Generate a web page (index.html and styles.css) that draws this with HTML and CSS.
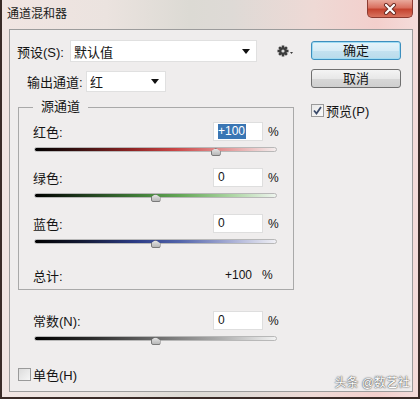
FILE: index.html
```html
<!DOCTYPE html>
<html lang="zh-CN">
<head>
    <meta charset="UTF-8">
    <title>通道混和器</title>
    <link rel="stylesheet" href="styles.css">
</head>
<body>
    <div class="window">
        <div class="titlebar">
            <span class="title">通道混和器</span>
            <div class="close">
                <svg width="14" height="12" viewBox="0 0 14 12">
                    <path d="M3 2 L11 10 M11 2 L3 10" stroke="#6a2a22" stroke-width="4" stroke-linecap="round"/>
                    <path d="M3 2 L11 10 M11 2 L3 10" stroke="#fff" stroke-width="2.2" stroke-linecap="round"/>
                </svg>
            </div>
        </div>

        <div class="client">
            <!-- 左侧 -->
            <div class="left">
                <div class="row preset">
                    <span class="label">预设(S):</span>
                    <div class="select">
                        <span>默认值</span>
                        <span class="arrow"></span>
                    </div>
                    <svg class="gear" width="17" height="12" viewBox="0 0 17 12">
                        <g transform="translate(6 6)" fill="#3c3c3c">
                            <rect x="-1.3" y="-5.5" width="2.6" height="11"/>
                            <rect x="-1.3" y="-5.5" width="2.6" height="11" transform="rotate(45)"/>
                            <rect x="-1.3" y="-5.5" width="2.6" height="11" transform="rotate(90)"/>
                            <rect x="-1.3" y="-5.5" width="2.6" height="11" transform="rotate(135)"/>
                            <circle r="3.8"/>
                            <circle r="1.6" fill="#d8d8d8"/>
                        </g>
                        <path d="M13 7 L16 7 L14.5 9 Z" fill="#3c3c3c"/>
                    </svg>
                </div>

                <div class="row output">
                    <span class="label">输出通道:</span>
                    <div class="select">
                        <span>红</span>
                        <span class="arrow"></span>
                    </div>
                </div>

                <fieldset class="source">
                    <legend>源通道</legend>

                    <div class="channel">
                        <div class="head">
                            <span class="name">红色:</span>
                            <div class="field"><span class="selected">+100</span></div>
                            <span class="pct">%</span>
                        </div>
                        <div class="track red">
                            <span class="thumb" style="left: 75%"></span>
                        </div>
                    </div>

                    <div class="channel">
                        <div class="head">
                            <span class="name">绿色:</span>
                            <div class="field">0</div>
                            <span class="pct">%</span>
                        </div>
                        <div class="track green">
                            <span class="thumb" style="left: 50%"></span>
                        </div>
                    </div>

                    <div class="channel">
                        <div class="head">
                            <span class="name">蓝色:</span>
                            <div class="field">0</div>
                            <span class="pct">%</span>
                        </div>
                        <div class="track blue">
                            <span class="thumb" style="left: 50%"></span>
                        </div>
                    </div>

                    <div class="total">
                        <span class="name">总计:</span>
                        <span class="value">+100</span>
                        <span class="pct">%</span>
                    </div>
                </fieldset>

                <div class="channel const">
                    <div class="head">
                        <span class="name">常数(N):</span>
                        <div class="field">0</div>
                        <span class="pct">%</span>
                    </div>
                    <div class="track gray">
                        <span class="thumb" style="left: 50%"></span>
                    </div>
                </div>

                <div class="check mono">
                    <span class="box"></span>
                    <span>单色(H)</span>
                </div>
            </div>

            <!-- 右侧按钮 -->
            <div class="right">
                <div class="btn default">确定</div>
                <div class="btn">取消</div>
                <div class="check preview">
                    <span class="box checked">
                        <svg width="11" height="11" viewBox="0 0 11 11">
                            <path d="M2 5.5 L4.5 8.5 L9 2" fill="none" stroke="#3a4a6a" stroke-width="1.8"/>
                        </svg>
                    </span>
                    <span>预览(P)</span>
                </div>
            </div>
        </div>

        <div class="watermark">头条 @数艺社</div>
    </div>
</body>
</html>
```

FILE: styles.css
```css
body {
    margin: 0;
    font-family: "Liberation Sans", "Noto Sans CJK SC", sans-serif;
    font-size: 13px;
    color: #141414;
}
.window {
    position: relative;
    width: 420px;
    height: 399px;
    box-sizing: border-box;
    border: 2px solid #3a2b27;
    border-top: none;
    display: flex;
    flex-direction: column;
    background: linear-gradient(to right, #f1e5e2 0%, #ebe3df 25%, #dcdad4 45%, #dedad6 55%, #eed9d5 75%, #f3cfcc 90%, #f4dcda 100%);
}
.titlebar {
    height: 29px;
    display: flex;
    justify-content: space-between;
    align-items: flex-start;
}
.title {
    padding: 6px 0 0 5px;
    font-size: 12px;
    line-height: 16px;
    color: #1a1a1a;
}
.close {
    width: 46px;
    height: 18px;
    margin-right: 5px;
    box-sizing: border-box;
    border: 1px solid #8c3a30;
    border-top: none;
    border-radius: 0 0 5px 5px;
    background: linear-gradient(to bottom, #e9a99c 0%, #d9705f 45%, #c4432f 55%, #d8735f 100%);
    display: flex;
    align-items: center;
    justify-content: center;
}
.client {
    flex: 1;
    margin: 0 5px 5px 7px;
    border: 1px solid #9c9c9c;
    background: #efeded;
    display: flex;
}
.left {
    width: 290px;
    padding-left: 7px;
    box-sizing: border-box;
}
.row {
    display: flex;
    align-items: center;
}
.preset {
    margin-top: 10px;
    height: 22px;
}
.preset .label {
    width: 53px;
}
.select {
    height: 22px;
    box-sizing: border-box;
    background: #fff;
    border: 1px solid #e0e0e0;
    display: flex;
    align-items: center;
    justify-content: space-between;
    padding: 0 6px 0 3px;
}
.preset .select {
    width: 187px;
}
.arrow {
    width: 0;
    height: 0;
    border-left: 4px solid transparent;
    border-right: 4px solid transparent;
    border-top: 5px solid #111;
}
.gear {
    margin-left: 20px;
}
.output {
    margin-top: 9px;
    height: 21px;
    padding-left: 10px;
}
.output .label {
    width: 59px;
}
.output .select {
    width: 80px;
    height: 21px;
}
.source {
    margin: 8px 0 0 1px;
    width: 276px;
    box-sizing: border-box;
    border: 1px solid #a9a9a9;
    padding: 8px 15px 6px 14px;
}
.source legend {
    padding: 0 8px;
    line-height: 14px;
}
.channel {
    height: 46px;
}
.head {
    display: flex;
    align-items: center;
    height: 19px;
}
.name {
    flex: 1;
}
.field {
    width: 50px;
    height: 19px;
    box-sizing: border-box;
    background: #fff;
    border: 1px solid #dedede;
    padding: 0 4px;
    line-height: 17px;
    font-size: 12px;
}
.selected {
    background: #3a76b4;
    color: #fff;
    display: inline-block;
    line-height: 15px;
    padding-right: 1px;
}
.pct {
    width: 10px;
    margin-left: 5px;
    text-align: right;
    font-size: 12px;
}
.track {
    position: relative;
    margin: 6px 1px 0 1px;
    height: 5px;
    box-sizing: border-box;
    border: 1px solid #b8b8b8;
    border-radius: 3px;
}
.track.red {
    background: linear-gradient(to right, #000 0%, #3a1111 18%, #8e2424 40%, #c94646 58%, #e49a9a 80%, #f3eded 100%);
}
.track.green {
    background: linear-gradient(to right, #000 0%, #1e3a1c 20%, #3e7a36 42%, #63a656 60%, #add6a4 82%, #eef4ee 100%);
}
.track.blue {
    background: linear-gradient(to right, #000 0%, #141a36 20%, #2c3c86 42%, #5264aa 60%, #aab0d6 82%, #f0f0f5 100%);
}
.track.gray {
    background: linear-gradient(to right, #000 0%, #2e2e2e 25%, #6a6a6a 50%, #a8a8a8 75%, #f2f2f2 100%);
}
.thumb {
    position: absolute;
    top: 0;
    width: 10px;
    height: 8px;
    margin-left: -5px;
    background: linear-gradient(to bottom, #e2e2e2, #b8b8b8);
    border: 1px solid #7a7a7a;
    box-sizing: border-box;
    clip-path: polygon(50% 0, 100% 45%, 100% 100%, 0 100%, 0 45%);
    border-radius: 2px;
}
.total {
    display: flex;
    align-items: center;
    height: 16px;
    margin-top: 7px;
}
.total .value {
    font-size: 12px;
}
.total .pct {
    margin: 0 6px 0 10px;
}
.const {
    margin: 21px 0 0 16px;
    width: 245px;
}
.check {
    display: flex;
    align-items: center;
    gap: 2px;
}
.box {
    width: 13px;
    height: 13px;
    box-sizing: border-box;
    border: 1px solid #9a9a9a;
    background: linear-gradient(135deg, #dcdcdc, #f6f6f6);
    display: flex;
    align-items: center;
    justify-content: center;
}
.box.checked {
    background: linear-gradient(135deg, #e8e8e8, #fafafa);
}
.mono {
    margin: 8px 0 0 1px;
}
.right {
    margin-left: 11px;
    padding-top: 11px;
}
.btn {
    width: 90px;
    height: 19px;
    box-sizing: border-box;
    border: 1px solid #707070;
    border-radius: 3px;
    background: linear-gradient(to bottom, #f4f4f4 0%, #e8e8e8 50%, #d8d8d8 51%, #cfcfcf 100%);
    text-align: center;
    line-height: 17px;
}
.btn.default {
    border-color: #3d8fbe;
    box-shadow: inset 0 0 0 1px #9fdcf3;
    background: linear-gradient(to bottom, #e6f4fa 0%, #d6ecf6 50%, #c4e2f0 51%, #b9dbeb 100%);
}
.btn + .btn {
    margin-top: 9px;
}
.preview {
    margin-top: 13px;
}
.watermark {
    position: absolute;
    right: 8px;
    bottom: 7px;
    font-size: 12px;
    color: #fff;
    text-shadow: 0 0 2px #555, 0 0 1px #333;
}
```
